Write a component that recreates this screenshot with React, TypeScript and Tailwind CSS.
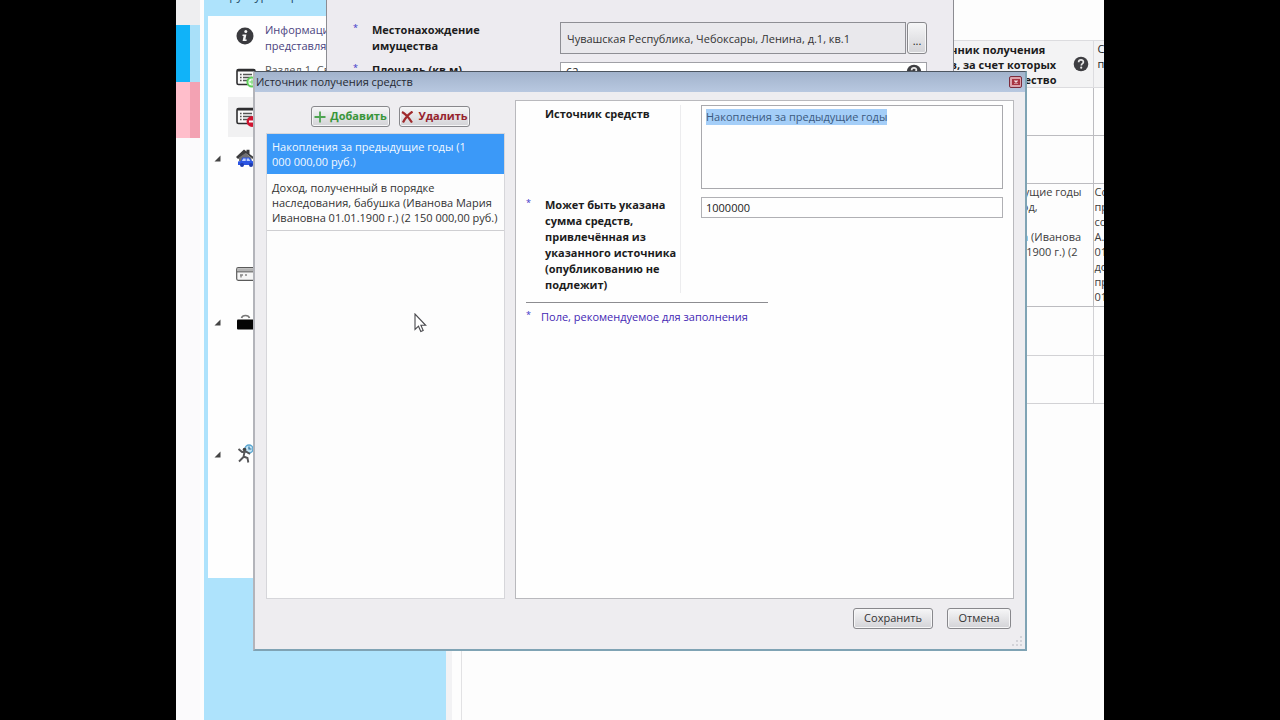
import { useEffect, useRef } from "react";
import type { ReactNode } from "react";

function InfoIcon() {
  return (
    <svg viewBox="0 0 18 18" className="size-[18px]" aria-hidden="true">
      <circle cx="9" cy="9" r="8.5" fill="#3a3a3e" />
      <circle cx="9.8" cy="4.6" r="1.5" fill="#f4f4f4" />
      <path d="M6.6 7.6h3.8l-1 5h1.4l-.3 1.4H6.6l1-5H6.4z" fill="#f4f4f4" />
    </svg>
  );
}

function HelpIcon() {
  return (
    <svg viewBox="0 0 16 16" className="size-4 shrink-0" aria-hidden="true">
      <circle cx="8" cy="8" r="7.3" fill="#3e3e42" />
      <path d="M5.6 6.2C5.7 3.2 10.5 3.3 10.4 6c0 1.6-2.1 1.7-2.1 3.4" fill="none" stroke="#e8e8e8" strokeWidth="1.7" />
      <circle cx="8.2" cy="11.7" r="1.1" fill="#e8e8e8" />
    </svg>
  );
}

function ListIcon({ mark }: { mark: "add" | "remove" }) {
  return (
    <svg viewBox="0 0 22 20" className="h-5 w-[22px]" aria-hidden="true">
      <rect x="1" y="1.5" width="18" height="15" rx="1.5" fill="#fafafa" stroke="#2e2e30" strokeWidth="1.6" />
      <path d="M1 2.5h18" stroke="#2e2e30" strokeWidth="2" />
      <path d="M4 6.5h1.6M4 9.5h1.6M4 12.5h1.6M7 6.5h9M7 9.5h9M7 12.5h6" stroke="#555" strokeWidth="1.3" />
      {mark === "add" ? (
        <g>
          <circle cx="16" cy="14" r="4.6" fill="#f2fff0" stroke="#5fd05a" strokeWidth="2" />
          <path d="M16 11.500v5M13.500 14h5" stroke="#8ade86" strokeWidth="1.400" />
        </g>
      ) : (
        <g>
          <circle cx="16" cy="14.500" r="5.400" fill="#cf1430" />
          <path d="M13 14.500h6" stroke="#fff" strokeWidth="2" />
        </g>
      )}
    </svg>
  );
}

function HouseCarIcon() {
  return (
    <svg viewBox="0 0 20 20" className="size-5" aria-hidden="true">
      <path d="M0 9 8 1.500l2.500 2V1.800h3V6L19 10l-2 1-7-5.500L2 11z" fill="#3c3c3e" />
      <path d="M3 9.500 9.500 5l6 5v3H3z" fill="#707072" />
      <path d="M2 13.500 4.500 13l2-3.500h7L16 13l3 .8V17H2z" fill="#2b55e4" />
      <path d="M7.200 10.600h2.500V13H5.900zM10.700 10.600h2.200l1.400 2.400h-3.600z" fill="#bcd0ff" />
      <circle cx="6" cy="17" r="2" fill="#1f3cae" />
      <circle cx="15" cy="17" r="2" fill="#1f3cae" />
    </svg>
  );
}

function CardIcon() {
  return (
    <svg viewBox="0 0 22 14" className="h-[14px] w-[22px]" aria-hidden="true">
      <rect x=".7" y=".7" width="20.600" height="12.600" rx="1.500" fill="#f6f6f6" stroke="#5a5a5a" strokeWidth="1.200" />
      <path d="M1 2.800h20" stroke="#b4b4b4" strokeWidth="2.600" />
      <path d="M1 4.800h20" stroke="#666" strokeWidth="1.200" />
      <path d="M4 8h3M9 8h2M5 8v2.500" stroke="#888" strokeWidth="1.400" />
    </svg>
  );
}

function CaseIcon() {
  return (
    <svg viewBox="0 0 20 16" className="h-4 w-5" aria-hidden="true">
      <path d="M5.500 4C6.500.6 12.500.6 13.500 4" fill="none" stroke="#777" strokeWidth="1.600" />
      <rect x="1" y="5.500" width="18" height="10" rx="1" fill="#050505" />
    </svg>
  );
}

function RunnerIcon() {
  return (
    <svg viewBox="0 0 20 20" className="size-5" aria-hidden="true">
      <circle cx="13" cy="5" r="4" fill="#c4e4f5" stroke="#5aa6d0" strokeWidth="1.500" />
      <path d="M13 2.500V5h2.500" fill="none" stroke="#2c6f9c" strokeWidth="1.200" />
      <circle cx="8.500" cy="5.500" r="1.800" fill="#444" />
      <path d="m2.500 5 3.500 3 4-.5 4 2.500M8.500 8l-1 5-4.500 4.500M7.500 12.500l4 1.500.8 4.500" fill="none" stroke="#565658" strokeWidth="1.900" />
    </svg>
  );
}

function Expander() {
  return (
    <svg viewBox="0 0 7 7" className="size-[7px]" aria-hidden="true">
      <path d="M6.500.5v6h-6z" fill="#444" />
    </svg>
  );
}

function TreeRow({
  icon,
  open,
  className,
  children,
}: {
  icon: ReactNode;
  open?: boolean;
  className: string;
  children?: ReactNode;
}) {
  return (
    <li className={`flex ${className}`}>
      <span className="flex h-5 w-7 shrink-0 items-center pl-[6px]">{open && <Expander />}</span>
      <span className="flex h-5 w-[29px] shrink-0 items-center">{icon}</span>
      {children}
    </li>
  );
}

function Star({ className }: { className: string }) {
  return <span className={`shrink-0 text-[9px] leading-3 font-normal text-[#3a34c8] ${className}`}>*</span>;
}

const buttonLook =
  "rounded-[3px] border border-[#88888c] bg-linear-to-b from-[#f6f6f7] to-[#d3d3d7] shadow-[inset_0_0_0_1px_#f6f6f7]";

function Sidebar() {
  return (
    <nav className="flex w-[242px] shrink-0 flex-col bg-[#aee3fc] pl-1">
      <div className="h-4 shrink-0 overflow-hidden pl-2">
        <div className="-mt-3 text-[12px] leading-4 text-[#25506b]">Структура справки</div>
      </div>
      <ul className="h-[562px] shrink-0 bg-[#fefefe] pt-[6px]">
        <TreeRow icon={<InfoIcon />} className="h-[46px] pt-1">
          <a href="#info" className="-mt-1 leading-4 text-[#4b4480]">
            Информация о
            <br />
            представляемом
          </a>
        </TreeRow>
        <TreeRow icon={<ListIcon mark="add" />} className="h-[29px]">
          <a href="#section1" className="-mt-[6px] leading-4 text-[#555]">
            Раздел 1. Сведения
          </a>
        </TreeRow>
        <li className="ml-5 flex h-10 items-center bg-[#f1f1f2] pl-2">
          <ListIcon mark="remove" />
        </li>
        <TreeRow open icon={<HouseCarIcon />} className="h-[116px] pt-[11px]" />
        <TreeRow icon={<CardIcon />} className="h-[48px] pt-[11px]" />
        <TreeRow open icon={<CaseIcon />} className="h-[132px] pt-[11px]" />
        <TreeRow open icon={<RunnerIcon />} className="pt-[11px]" />
      </ul>
    </nav>
  );
}

function PropertyTable() {
  return (
    <div className="flex min-w-0 flex-1 justify-end overflow-hidden border-l border-[#e2e2e4] pt-10">
      <table className="w-[208px] shrink-0 table-fixed border-collapse self-start text-[#3c3c3c]">
        <thead>
          <tr className="h-[47px] bg-[#f3f3f4] text-[11px] text-[#1c1c1c]">
            <th className="border border-[#dcdcdf] p-0">
              <div className="flex items-center justify-end gap-4 pr-1 leading-[15px]">
                <span>
                  Источник получения
                  <br />
                  средств, за счет которых
                  <br />
                  приобретено имущество
                </span>
                <HelpIcon />
              </div>
            </th>
            <th className="w-[11px] border border-r-0 border-[#dcdcdf] p-0 pl-1 text-left align-top leading-[15px] font-normal">
              С
              <br />п
            </th>
          </tr>
        </thead>
        <tbody>
          <tr className="h-12">
            <td className="border border-[#bcbcc0] p-0" />
            <td className="border border-r-0 border-[#bcbcc0] p-0" />
          </tr>
          <tr className="h-12">
            <td className="border border-[#bcbcc0] p-0" />
            <td className="border border-r-0 border-[#bcbcc0] p-0" />
          </tr>
          <tr className="h-[123px] align-top leading-[15px]">
            <td className="border border-[#bcbcc0] p-0 pl-[3px] whitespace-nowrap">
              Накопления за предыдущие годы
              <br />
              (1 000 000,00 руб.), Доход,
              <br />
              полученный в порядке
              <br />
              наследования, бабушка (Иванова
              <br />
              Мария Ивановна 01.01.1900 г.) (2
            </td>
            <td className="border border-r-0 border-[#bcbcc0] p-0 pl-px">
              Со
              <br />
              пр
              <br />
              со
              <br />
              А.
              <br />
              01
              <br />
              до
              <br />
              пр
              <br />
              01
            </td>
          </tr>
          <tr className="h-[49px]">
            <td className="border border-[#d2d2d5] p-0" />
            <td className="border border-r-0 border-[#d2d2d5] p-0" />
          </tr>
          <tr className="h-12">
            <td className="border border-[#d2d2d5] p-0" />
            <td className="border border-r-0 border-[#d2d2d5] p-0" />
          </tr>
        </tbody>
      </table>
    </div>
  );
}

function PropertyWindow() {
  return (
    <section className="absolute inset-x-[150px] top-0 h-[200px] border-x border-[#8c8c92] bg-[#edebf0] px-[26px] pt-[22px]">
      <div className="flex h-10">
        <Star className="w-[19px]" />
        <label htmlFor="address" className="w-[188px] font-bold leading-4">
          Местонахождение
          <br />
          имущества
        </label>
        <input
          id="address"
          readOnly
          className="h-8 min-w-0 flex-1 border border-[#8e8e94] bg-[#e9e8ec] px-[6px] text-[#333]"
          defaultValue="Чувашская Республика, Чебоксары, Ленина, д.1, кв.1"
        />
        <button
          type="button"
          aria-label="Выбрать адрес"
          className={`ml-px flex h-8 w-5 items-end justify-center pb-1 ${buttonLook}`}
        >
          ...
        </button>
      </div>
      <div className="flex">
        <Star className="w-[19px]" />
        <label htmlFor="area" className="w-[188px] font-bold leading-4">
          Площадь (кв.м)
        </label>
        <div className="flex h-5 flex-1 items-center border border-[#a0a0a6] bg-white pr-1">
          <input id="area" className="min-w-0 flex-1 px-[5px] leading-4" defaultValue="62" />
          <HelpIcon />
        </div>
      </div>
    </section>
  );
}

function SourceDialog() {
  const source = useRef<HTMLTextAreaElement>(null);
  useEffect(() => {
    source.current?.focus();
    source.current?.select();
  }, []);

  return (
    <section
      role="dialog"
      aria-labelledby="dialog-title"
      className="absolute inset-x-[77px] top-[71px] bottom-[69px] flex flex-col border-2 border-t border-[#7fa3b4] border-t-[#4c5560] border-l-[#b3b4ba] bg-[#eeedf0]"
    >
      <header className="flex h-5 shrink-0 items-center justify-between bg-linear-to-b from-[#a2b3cc] to-[#b8c8e0] pr-[3px]">
        <h1 id="dialog-title" className="pl-px text-[11px] leading-4 text-[#262a33]">
          Источник получения средств
        </h1>
        <button
          type="button"
          aria-label="Закрыть"
          className="flex h-3 w-[13px] items-center justify-center rounded-[2px] border border-[#7c2c3c] bg-[#dba3ac]"
        >
          <svg viewBox="0 0 8 6" className="h-[6px] w-2" aria-hidden="true">
            <rect width="8" height="6" fill="#a83340" />
            <path d="m2.500 1.500 3 3M5.500 1.500l-3 3" stroke="#f3dfe2" strokeWidth="1.400" />
          </svg>
        </button>
      </header>

      <div className="flex min-h-0 flex-1 gap-[10px] px-[11px] pt-2">
        <div className="flex w-[239px] shrink-0 flex-col">
          <div className="flex h-[33px] items-start gap-[9px] pt-[6px] pl-[45px] text-[11px] font-bold">
            <button
              type="button"
              className={`flex h-[21px] w-[79px] items-center justify-center gap-1 text-[#38963a] ${buttonLook}`}
            >
              <svg viewBox="0 0 12 12" className="size-3 shrink-0" aria-hidden="true">
                <path d="M6 .5v11M.5 6h11" stroke="#4fa552" strokeWidth="1.800" />
              </svg>
              Добавить
            </button>
            <button
              type="button"
              className={`flex h-[21px] w-[71px] items-center justify-center gap-1 text-[#96222c] ${buttonLook}`}
            >
              <svg viewBox="0 0 13 12" className="h-3 w-[13px] shrink-0" aria-hidden="true">
                <path d="M1 1c4 2 7 6 10 10.500M11.500.5C8 3 4 7 2 11.500" fill="none" stroke="#a02a2c" strokeWidth="2.200" />
              </svg>
              Удалить
            </button>
          </div>
          <ul className="min-h-0 flex-1 border border-[#d6d6da] bg-[#fdfdfd] leading-[15px]">
            <li>
              <button
                type="button"
                className="block h-10 w-full bg-[#3b99f8] pl-[5px] text-left font-medium text-[#f2f8ff]"
              >
                Накопления за предыдущие годы (1
                <br />
                000 000,00 руб.)
              </button>
            </li>
            <li className="border-b border-[#cfcfd2]">
              <button type="button" className="block h-14 w-full pl-[5px] text-left whitespace-nowrap text-[#333]">
                Доход, полученный в порядке
                <br />
                наследования, бабушка (Иванова Мария
                <br />
                Ивановна 01.01.1900 г.) (2 150 000,00 руб.)
              </button>
            </li>
          </ul>
        </div>

        <form className="min-w-0 flex-1 border border-[#b9b9bd] bg-[#fefefe] px-[10px] pt-1">
          <div className="grid grid-cols-[155px_1fr] gap-x-5">
            <div className="flex h-[92px] border-r border-[#ececee] pt-px pl-[19px] font-bold">
              <label htmlFor="source" className="leading-4">
                Источник средств
              </label>
            </div>
            <textarea
              id="source"
              ref={source}
              className="h-[84px] resize-none border border-[#a9a9ad] bg-[#fefefe] px-1 py-[3px] leading-4 text-[#3c4a5c] outline-none selection:bg-[#a3cdf8]/99 selection:text-[#3b5a80]"
              defaultValue="Накопления за предыдущие годы"
            />
            <div className="flex border-r border-[#ececee] font-bold">
              <Star className="w-[19px]" />
              <label htmlFor="amount" className="leading-4 whitespace-nowrap">
                Может быть указана
                <br />
                сумма средств,
                <br />
                привлечённая из
                <br />
                указанного источника
                <br />
                (опубликованию не
                <br />
                подлежит)
              </label>
            </div>
            <input
              id="amount"
              className="h-[21px] border border-[#b0b0b4] bg-[#fefefe] px-1 text-[#222]"
              defaultValue="1000000"
            />
          </div>
          <hr className="mt-[9px] w-[242px] border-[#8c8c90]" />
          <p className="mt-[6px] flex text-[#4328b4]">
            <Star className="w-[15px]" />
            <span className="leading-4">Поле, рекомендуемое для заполнения</span>
          </p>
        </form>
      </div>

      <footer className="relative flex h-[50px] shrink-0 items-start justify-end gap-[14px] pt-[9px] pr-[14px]">
        <button type="button" className={`h-[21px] w-20 text-[#333] ${buttonLook}`}>
          Сохранить
        </button>
        <button type="button" className={`h-[21px] w-16 text-[#333] ${buttonLook}`}>
          Отмена
        </button>
        <svg viewBox="0 0 12 12" className="absolute right-[2px] bottom-[2px] size-3" aria-hidden="true">
          <path
            d="M9 1h2v2H9zM9 5h2v2H9zM5 5h2v2H5zM9 9h2v2H9zM5 9h2v2H5zM1 9h2v2H1z"
            fill="#d3d3d8"
          />
        </svg>
      </footer>
    </section>
  );
}

export default function App() {
  return (
    <div className="flex h-screen justify-center overflow-hidden bg-black font-['Open_Sans','Noto_Sans',sans-serif] text-[11px] text-[#1c1c1c]">
      <main className="relative flex w-[72.5%] overflow-hidden bg-[#fdfdfd]">
        <div className="mr-1 flex w-6 shrink-0 flex-col bg-[#fbfafc]">
          <div className="h-[25px] bg-[#eeeef0]" />
          <div className="h-[57px] border-r-[10px] border-[#a9e0f9] bg-[#10b3f9]" />
          <div className="h-14 border-r-[10px] border-[#f3a2b3] bg-[#ffbecb]" />
        </div>
        <Sidebar />
        <div className="mr-[9px] w-[6px] shrink-0 bg-[#f2f2f4]" />
        <PropertyTable />
        <PropertyWindow />
        <SourceDialog />
        <svg viewBox="0 0 13 20" className="absolute top-[313px] left-[238px] h-5 w-[13px]" aria-hidden="true">
          <path
            d="M1 1v15.500l3.500-3.300 2.300 5.300 2.400-1-2.300-5.200h4.800z"
            fill="#fff"
            stroke="#4a4a4e"
            strokeWidth="1.100"
          />
        </svg>
      </main>
    </div>
  );
}
